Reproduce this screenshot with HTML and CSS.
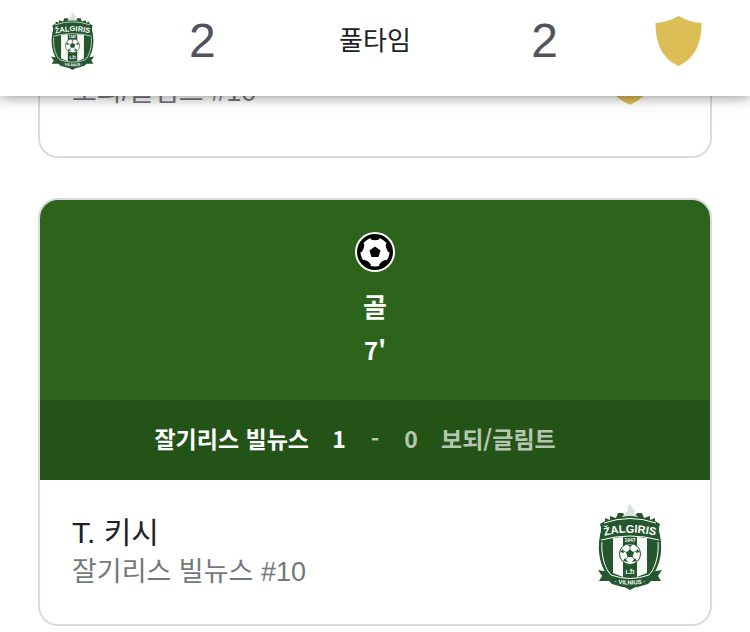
FILE: index.html
```html
<!DOCTYPE html>
<html lang="ko">
<head>
<meta charset="utf-8">
<meta name="viewport" content="width=device-width">
<title>잘기리스 빌뉴스 2 - 2 보되/글림트</title>
<link rel="stylesheet" href="styles.css">
</head>
<body>
<svg class="defs" aria-hidden="true">
  <defs>
    <path id="crest-arc" d="M2 33Q32 24 62 33"/>
    <path id="crest-ribbon" d="M10 78Q32 83 54 78"/>
    <symbol id="crest" viewBox="0 0 64 86">
      <path fill="#24572e" d="M2 20L7 17V14L12 16V12L18 14L20 9H25L27 12H37L39 9H44L46 14L52 12V16L57 14V17L62 20Q60 25 62 31C65 47 62 61 55 71Q46 79 32 86Q18 79 9 71C2 61-1 47 2 31Q4 25 2 20Z"/>
      <path fill="#d9e2da" d="M24 13L28 8 30 7 30 3 32 0 34 3 37 7 36 9 40 13Q32 11 24 13Z"/>
      <path fill="none" stroke="#fff" stroke-width="1" d="M6 19Q32 10 58 19M3 36Q32 28 61 36M4 38C3 50 6 61 11 69M60 38C61 50 58 61 53 69"/>
      <path fill="#f8f8f8" d="M15 34L25 33V73L15 69ZM39 33L49 34V69L39 73Z"/>
      <path fill="#24572e" d="M0 66L11 68 13 72Q32 80 51 72L53 68 64 66 60 72 63 77 53 77 50 80Q32 87 14 80L11 77 1 77 4 72Z"/>
      <path fill="none" stroke="#fff" d="M10 67L13 71Q32 78 51 71L54 67M11 78L14 81M53 78L50 81"/>
      <circle cx="32" cy="50" r="10.500" fill="#fff" stroke="#24572e"/>
      <path fill="#24572e" d="M32 45.500L36 48.500 34.500 53H29.500L28 48.500ZM29 40.500H35L32 43ZM22 48L25 45 26 49ZM42 48L39 45 38 49ZM25 57L27 54 30 58ZM39 57L37 54 34 58Z"/>
      <path fill="none" stroke="#24572e" stroke-width=".7" d="M32 46V43M36 48L39 47M34 53L37 56M30 53L27 56M28 48L25 47"/>
      <text class="crest-name"><textPath href="#crest-arc" startOffset="50%">ŽALGIRIS</textPath></text>
      <text class="crest-year" x="32" y="38">1947</text>
      <text class="crest-mark" x="32" y="70">LŽI</text>
      <text class="crest-city"><textPath href="#crest-ribbon" startOffset="50%">· VILNIUS ·</textPath></text>
    </symbol>
    <symbol id="shield" viewBox="0 0 47 50">
      <path fill="#dbbf56" d="M23.500 0Q13 6 .5 7C.5 29 8 43 23.500 50C39 43 46.500 29 46.500 7Q34 6 23.500 0Z"/>
    </symbol>
  </defs>
</svg>

<header class="scorebar">
  <svg class="scorebar-crest" role="img" aria-label="잘기리스 빌뉴스"><use href="#crest"/></svg>
  <span class="total total-home">2</span>
  <span class="status">풀타임</span>
  <span class="total total-away">2</span>
  <svg class="scorebar-shield" role="img" aria-label="보되/글림트"><use href="#shield"/></svg>
</header>

<main class="timeline">
  <article class="card">
    <div class="player player-tall">
      <div class="player-text">
        <div class="player-name"></div>
        <div class="player-team">보되/글림트 #10</div>
      </div>
      <div class="badge"><svg class="badge-shield"><use href="#shield"/></svg></div>
    </div>
  </article>

  <article class="card">
    <div class="event">
      <svg class="ball" viewBox="0 0 40 40" aria-hidden="true">
        <circle cx="20" cy="20" r="20" fill="#fff"/>
        <circle cx="20" cy="20" r="18" fill="#000"/>
        <circle cx="20" cy="20" r="14.500" fill="#fff"/>
        <path d="M20 14.500L25.500 18.500 23.500 25H16.500L14.500 18.500Z"/>
        <path id="patch" d="M14.500 4H25.500L24 7.500Q20 9 16 7.500Z"/>
        <use href="#patch" transform="rotate(72 20 20)"/>
        <use href="#patch" transform="rotate(144 20 20)"/>
        <use href="#patch" transform="rotate(216 20 20)"/>
        <use href="#patch" transform="rotate(288 20 20)"/>
      </svg>
      <div class="event-type">골</div>
      <div class="event-minute">7'</div>
    </div>
    <div class="score">
      <span class="score-home">잘기리스 빌뉴스</span>
      <span class="score-digit">1</span>
      <span class="score-digit muted">-</span>
      <span class="score-digit muted">0</span>
      <span class="score-away muted">보되/글림트</span>
    </div>
    <div class="player">
      <div class="player-text">
        <div class="player-name">T. 키시</div>
        <div class="player-team">잘기리스 빌뉴스 #10</div>
      </div>
      <div class="badge"><svg class="badge-crest"><use href="#crest"/></svg></div>
    </div>
  </article>
</main>
</body>
</html>
```
FILE: styles.css
```css
* {
  box-sizing: border-box;
}

body {
  margin: 0;
  background: #fff;
  color: #202124;
  font-family: "Liberation Sans", "Noto Sans CJK KR", sans-serif;
}

svg {
  display: block;
}

.defs {
  position: absolute;
  width: 0;
  height: 0;
}

.scorebar {
  position: sticky;
  top: 0;
  z-index: 1;
  display: grid;
  grid-template-columns: 144px 1fr auto 1fr 144px;
  align-items: center;
  height: 96px;
  padding-bottom: 14px;
  background: #fff;
  box-shadow: 0 0 14px rgba(0, 0, 0, 0.5);
}

.scorebar-crest {
  justify-self: center;
  width: 43px;
  height: 58px;
}

.scorebar-shield {
  justify-self: center;
  width: 47px;
  height: 50px;
}

.total {
  color: #50555b;
  font-size: 48px;
  line-height: 56px;
}

.total-home {
  padding-left: 45px;
}

.total-away {
  padding-right: 48px;
  text-align: right;
}

.status {
  font-size: 26px;
  line-height: 40px;
  font-weight: 400;
}

/* The first card starts under the score bar. */
.timeline {
  display: grid;
  gap: 40px;
  margin-top: -98px;
  padding: 0 38px;
}

.card {
  overflow: hidden;
  border: 2px solid #dadae0;
  border-radius: 20px;
}

.event {
  display: flex;
  flex-direction: column;
  align-items: center;
  padding: 32px 0 26px;
  background: #2b641a;
  color: #fff;
  font-family: "Noto Sans CJK KR", sans-serif;
  font-weight: 700;
}

.ball {
  width: 40px;
  height: 40px;
  margin-bottom: 14px;
}

.event-type {
  font-size: 26px;
  line-height: 40px;
}

.event-minute {
  font-size: 24px;
  line-height: 48px;
}

.score {
  display: grid;
  grid-template-columns: 1fr 36px 36px 36px 1fr;
  align-items: center;
  height: 80px;
  padding-bottom: 4px;
  background: #245318;
  color: #fff;
  font-family: "Noto Sans CJK KR", sans-serif;
  font-size: 23px;
  font-weight: 700;
}

.score-home {
  padding-right: 12px;
  text-align: right;
}

.score-away {
  padding-left: 12px;
}

.score-digit {
  text-align: center;
}

.muted {
  color: #b6c7b1;
}

.player {
  display: flex;
  justify-content: space-between;
  align-items: flex-start;
  padding: 24px 44px 32px 32px;
}

.player-tall {
  padding-bottom: 44px;
}

.player-text {
  padding-top: 9px;
}

.player-name {
  height: 40px;
  font-size: 30px;
  line-height: 40px;
}

.player-team {
  height: 39px;
  color: #75787d;
  font-size: 27px;
  line-height: 39px;
}

.badge {
  display: flex;
  justify-content: center;
  align-items: center;
  width: 72px;
  height: 86px;
}

.badge-crest {
  width: 64px;
  height: 86px;
}

.badge-shield {
  width: 70px;
  height: 75px;
}

.crest-name,
.crest-year,
.crest-mark,
.crest-city {
  fill: #fff;
  font-family: "Liberation Sans", sans-serif;
  font-weight: 700;
  text-anchor: middle;
}

.crest-name {
  font-size: 11px;
}

.crest-year {
  font-size: 5px;
}

.crest-mark {
  font-size: 6px;
}

.crest-city {
  font-size: 6px;
}
```
